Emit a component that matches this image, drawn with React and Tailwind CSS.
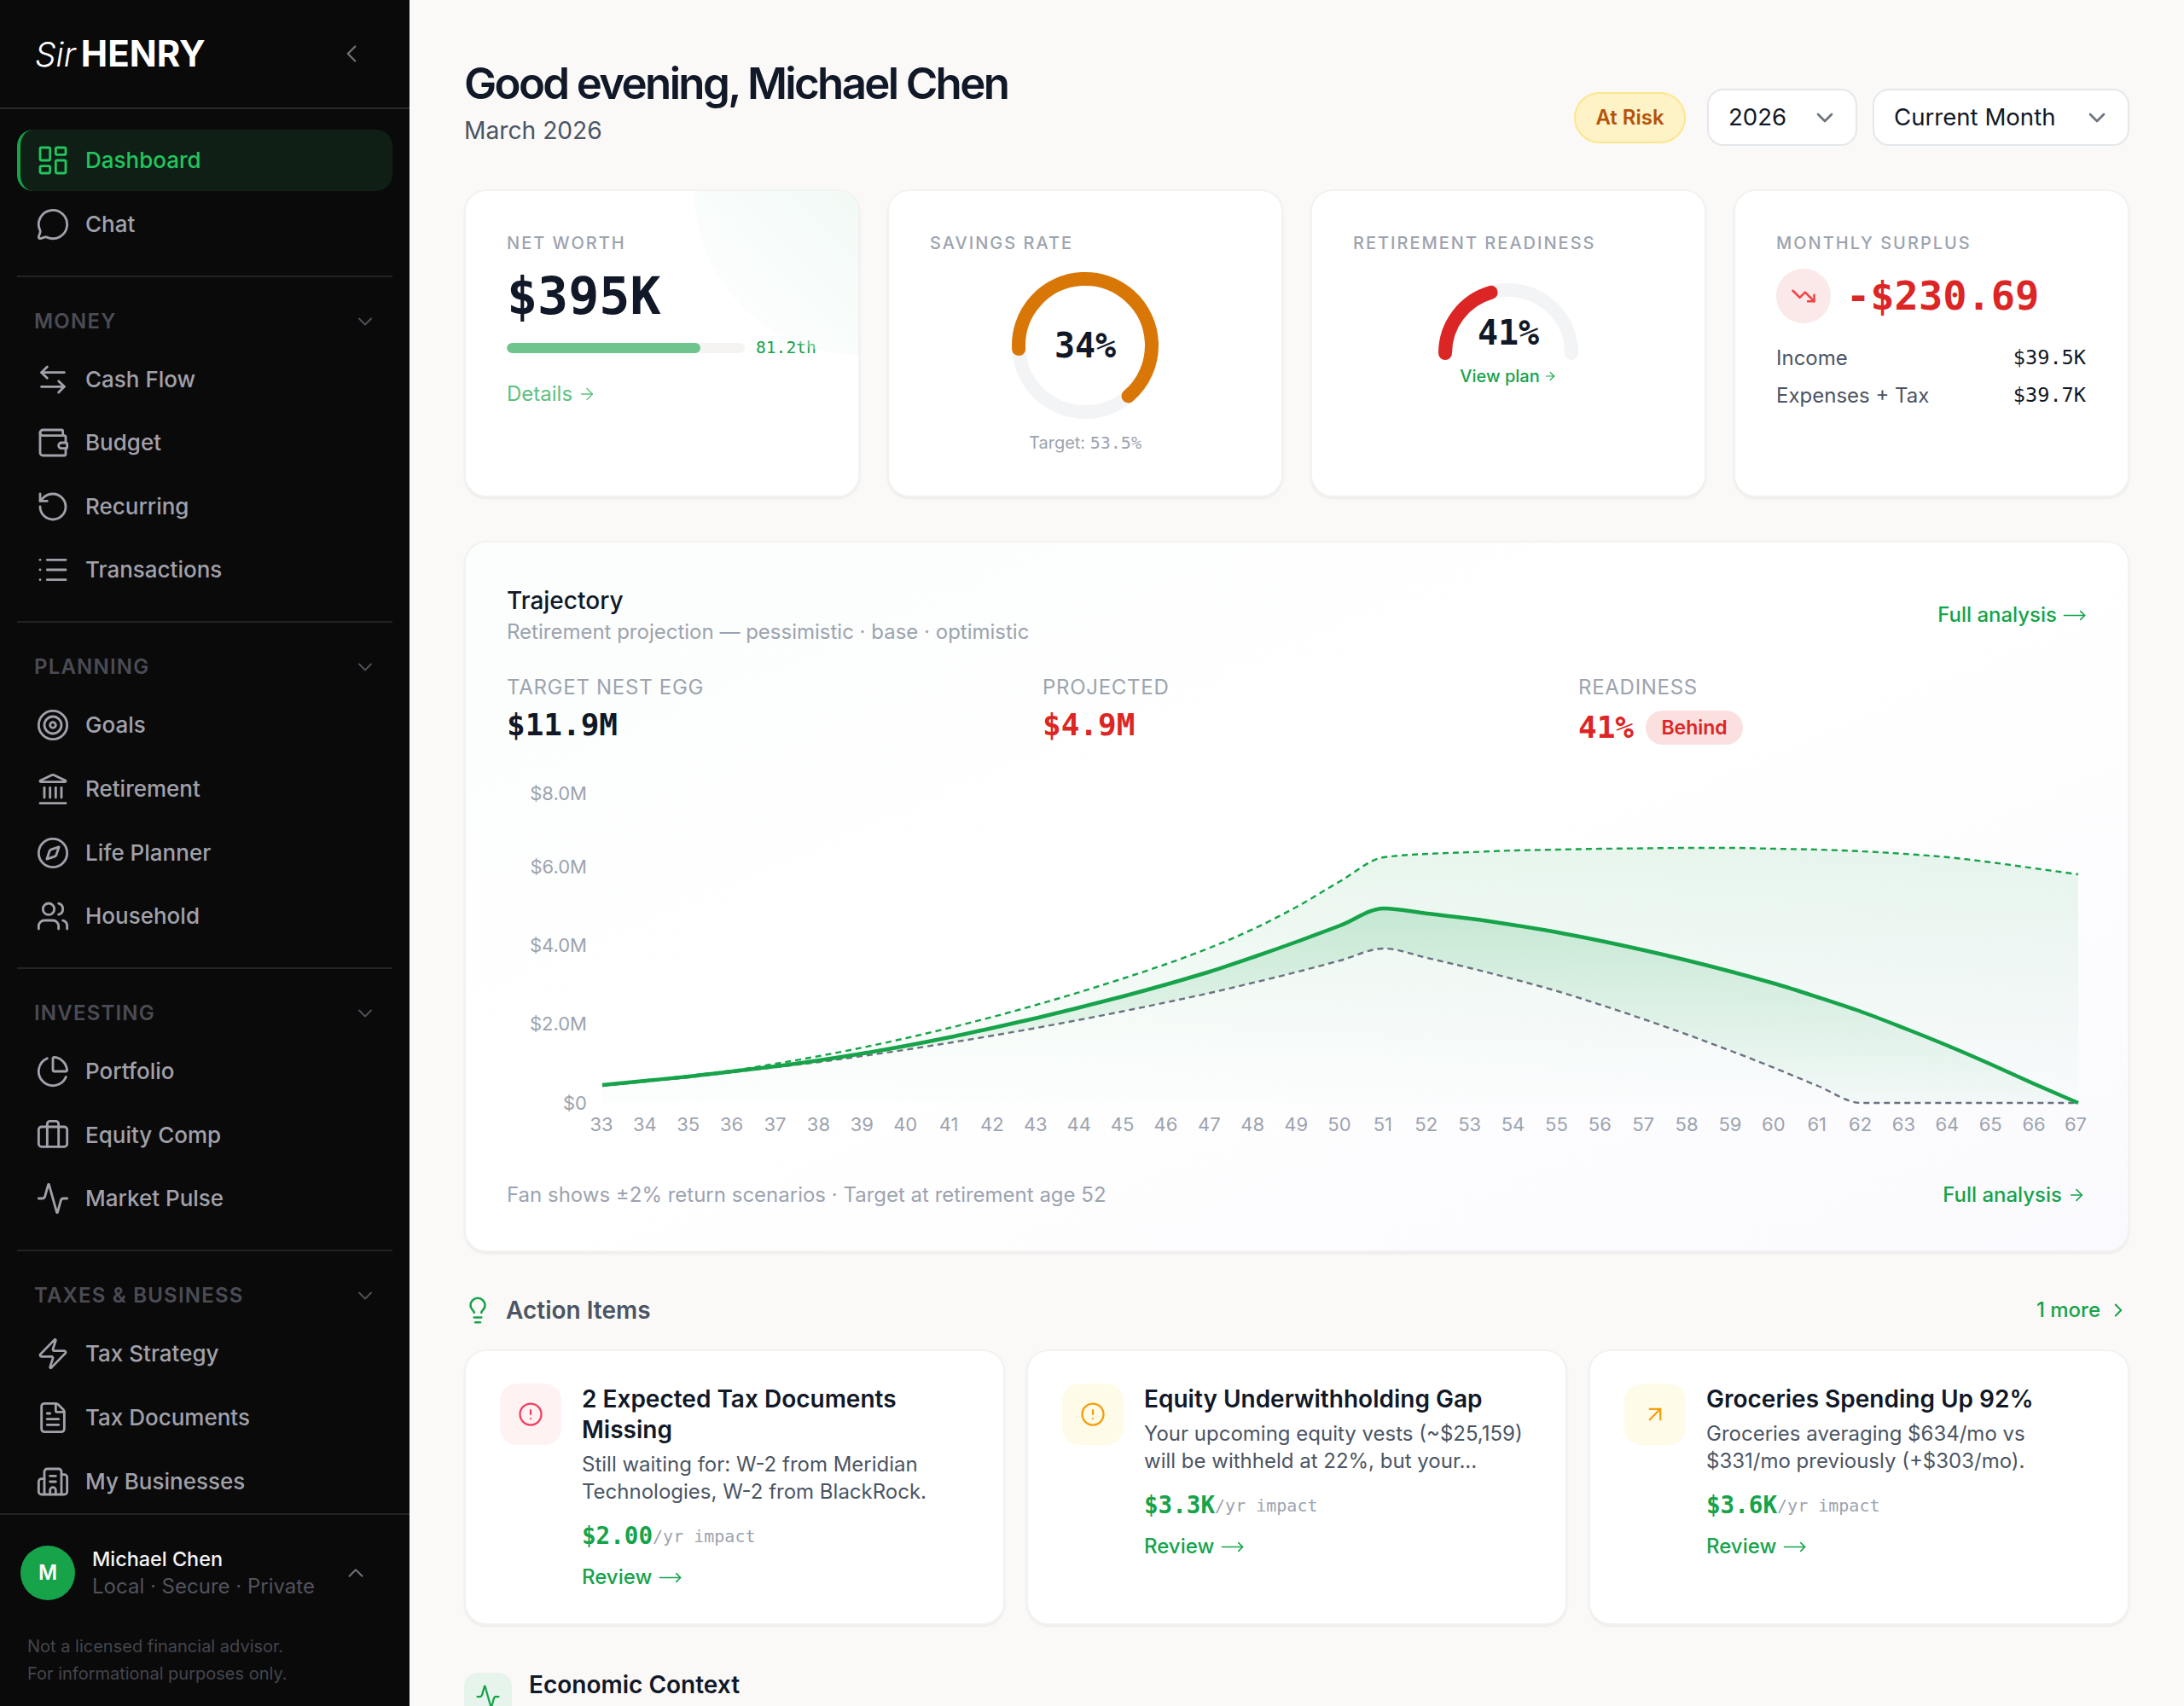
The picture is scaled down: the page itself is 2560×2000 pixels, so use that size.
import React from 'react';
import {
  LayoutDashboard, MessageCircle, ArrowLeftRight, Wallet, RotateCcw, List, Target, Landmark, Compass, Users,
  PieChart, Briefcase, Activity, Zap, FileText, Building2, ChevronLeft, ChevronDown, ChevronUp, ChevronRight,
  ArrowRight, TrendingDown, CircleAlert, ArrowUpRight, Lightbulb, MoveRight,
} from 'lucide-react';

const MONO = "font-['DejaVu_Sans_Mono',monospace]";

function NavItem({ icon: Icon, label, active }) {
  return (
    <div className={active
      ? 'h-[72px] flex items-center rounded-[19px] border-l-[4px] border-[#16a34a] bg-[#0f1f16] pl-[18px] text-[#22c55e]'
      : 'h-[72px] flex items-center pl-[22px] text-[#a1a1aa]'}>
      <Icon size={40} strokeWidth={1.7} className="shrink-0" />
      <span className="ml-[18px] text-[26px] font-medium leading-none">{label}</span>
    </div>
  );
}

function Section({ title, items }) {
  return (
    <div className="mt-[24px] border-t-2 border-[#232325] pt-[34px]">
      <div className="h-[36px] mb-[14px] flex items-center justify-between pl-[20px] pr-[18px]">
        <span className="text-[24px] font-semibold tracking-[0.05em] text-[#4b4b54]">{title}</span>
        <ChevronDown size={28} strokeWidth={1.6} className="text-[#52525b]" />
      </div>
      <div className="flex flex-col gap-[2.6px]">
        {items.map((i) => <NavItem key={i.label} {...i} />)}
      </div>
    </div>
  );
}

function Sidebar() {
  return (
    <aside className="w-[480px] h-[2000px] shrink-0 bg-[#0a0a0b] flex flex-col">
      <div className="h-[128px] shrink-0 border-b-2 border-[#2a2a2c] flex items-center justify-between pl-[41px] pr-[51px]">
        <div className="text-white leading-none flex items-baseline">
          <span className="italic font-light text-[39px]">Sir</span>
          <span className="font-bold ml-[6px] text-[42px]">HENRY</span>
        </div>
        <ChevronLeft size={34} strokeWidth={1.6} className="text-[#71717a]" />
      </div>
      <nav className="flex-1 overflow-hidden px-[20px] pt-[24px]">
        <div className="flex flex-col gap-[2.6px]">
          <NavItem icon={LayoutDashboard} label="Dashboard" active />
          <NavItem icon={MessageCircle} label="Chat" />
        </div>
        <Section title="MONEY" items={[
          { icon: ArrowLeftRight, label: 'Cash Flow' },
          { icon: Wallet, label: 'Budget' },
          { icon: RotateCcw, label: 'Recurring' },
          { icon: List, label: 'Transactions' },
        ]} />
        <Section title="PLANNING" items={[
          { icon: Target, label: 'Goals' },
          { icon: Landmark, label: 'Retirement' },
          { icon: Compass, label: 'Life Planner' },
          { icon: Users, label: 'Household' },
        ]} />
        <Section title="INVESTING" items={[
          { icon: PieChart, label: 'Portfolio' },
          { icon: Briefcase, label: 'Equity Comp' },
          { icon: Activity, label: 'Market Pulse' },
        ]} />
        <Section title="TAXES & BUSINESS" items={[
          { icon: Zap, label: 'Tax Strategy' },
          { icon: FileText, label: 'Tax Documents' },
          { icon: Building2, label: 'My Businesses' },
        ]} />
      </nav>
      <div className="h-[226px] shrink-0 border-t-2 border-[#232325] pt-[35px]">
        <div className="flex items-center pl-[24px] pr-[48px]">
          <div className="w-[64px] h-[64px] rounded-full bg-[#16a34a] flex items-center justify-center text-white text-[24px] font-semibold">M</div>
          <div className="ml-[20px] flex-1">
            <div className="text-[23.4px] leading-[32px] mt-[1px] font-medium text-[#f4f4f5]">Michael Chen</div>
            <div className="text-[24px] leading-[32px] text-[#52525b]">Local · Secure · Private</div>
          </div>
          <ChevronUp size={30} strokeWidth={1.6} className="text-[#71717a]" />
        </div>
        <div className="mt-[38px] pl-[32px] text-[20px] leading-[32px] text-[#45454c]">
          <div>Not a licensed financial advisor.</div>
          <div>For informational purposes only.</div>
        </div>
      </div>
    </aside>
  );
}

const cardCls = 'bg-white rounded-[26px] border-2 border-[#f3f2f0] shadow-[0_2px_3px_rgba(0,0,0,0.06)]';
const labelCls = 'text-[20px] leading-[28px] font-medium tracking-[0.1em] text-[#9ca3af]';

function Select({ label, width }) {
  return (
    <div className={`${width} h-[67px] rounded-[19px] border-2 border-[#e5e7eb] bg-white flex items-center justify-between pl-[23px] pr-[20px]`}>
      <span className="text-[27.6px] text-[#111827]">{label}</span>
      <ChevronDown size={32} strokeWidth={2} className="text-[#6b7280]" />
    </div>
  );
}

function NetWorth() {
  return (
    <div className={`${cardCls} relative overflow-hidden pl-[48px] pr-[48px] pt-[47px]`}>
      <div className="absolute top-0 right-0 w-[192px] h-[192px] rounded-bl-full bg-gradient-to-bl from-[#f2faf6] to-transparent" />
      <div className={labelCls}>NET WORTH</div>
      <div className={`${MONO} mt-[12px] text-[60px] leading-[72px] font-bold text-[#111827]`}>$395K</div>
      <div className="mt-[11px] flex items-center">
        <div className="w-[279px] h-[12px] rounded-full bg-[#f5f4f2] overflow-hidden">
          <div className="h-full w-[81.2%] rounded-full bg-[#6fc48e]" />
        </div>
        <span className={`${MONO} ml-[13px] text-[19.6px] leading-[28px] text-[#16a34a]`}>81.2th</span>
      </div>
      <div className="mt-[24px] flex items-center gap-[6px] text-[24px] leading-[32px] text-[#5fc080]">
        Details <ArrowRight size={22} strokeWidth={1.5} />
      </div>
    </div>
  );
}

function Savings() {
  const r = 78;
  const c = 2 * Math.PI * r;
  return (
    <div className={`${cardCls} pl-[48px] pr-[48px] pt-[47px]`}>
      <div className={labelCls}>SAVINGS RATE</div>
      <div className="relative mt-[18px] w-[176px] h-[176px] mx-auto">
        <svg width="176" height="176" viewBox="0 0 176 176">
          <circle cx="88" cy="88" r={r} fill="none" stroke="#f3f4f6" strokeWidth="16" />
          <circle cx="88" cy="88" r={r} fill="none" stroke="#d97706" strokeWidth="16" strokeLinecap="round"
            strokeDasharray={`${c * 0.645} ${c}`} transform="rotate(177 88 88)" />
        </svg>
        <div className={`${MONO} absolute inset-0 flex items-center justify-center text-[40px] font-bold text-[#111827]`}>34%</div>
      </div>
      <div className="mt-[12px] text-center text-[20px] leading-[28px] text-[#9ca3af]">
        Target: <span className={MONO}>53.5%</span>
      </div>
    </div>
  );
}

function Readiness() {
  const r = 74;
  const pts = `M 14 84 A ${r} ${r} 0 0 1 162 84`;
  const len = Math.PI * r;
  return (
    <div className={`${cardCls} pl-[48px] pr-[48px] pt-[47px]`}>
      <div className={labelCls}>RETIREMENT READINESS</div>
      <div className="relative mt-[31px] w-[176px] h-[100px] mx-auto">
        <svg width="176" height="100" viewBox="0 0 176 100">
          <path d={pts} fill="none" stroke="#f3f4f6" strokeWidth="16" strokeLinecap="round" />
          <path d={pts} fill="none" stroke="#dc2626" strokeWidth="16" strokeLinecap="round" strokeDasharray={`${len * 0.41} ${len}`} />
        </svg>
        <div className={`${MONO} absolute left-0 right-0 top-[35px] text-center text-[40px] leading-[50px] font-bold text-[#111827]`}>41%</div>
      </div>
      <div className="mt-[-3px] flex items-center justify-center gap-[4px] text-[20px] leading-[28px] font-medium text-[#16a34a]">
        View plan <ArrowRight size={16} strokeWidth={1.7} />
      </div>
    </div>
  );
}

function Surplus() {
  return (
    <div className={`${cardCls} pl-[48px] pr-[48px] pt-[47px]`}>
      <div className={labelCls}>MONTHLY SURPLUS</div>
      <div className="mt-[16px] flex items-center">
        <div className="w-[64px] h-[64px] rounded-full bg-[#fbe8e8] flex items-center justify-center">
          <TrendingDown size={30} className="text-[#ef4444]" />
        </div>
        <span className={`${MONO} ml-[18px] text-[47px] leading-[64px] font-bold text-[#dc2626]`}>-$230.69</span>
      </div>
      <div className="mt-[19px] flex justify-between items-center h-[44px]">
        <span className="text-[24px] text-[#4b5563]">Income</span>
        <span className={`${MONO} text-[23.6px] text-[#111827] mr-[1px]`}>$39.5K</span>
      </div>
      <div className="flex justify-between items-center h-[44px]">
        <span className="text-[24px] text-[#4b5563]">Expenses + Tax</span>
        <span className={`${MONO} text-[23.6px] text-[#111827] mr-[1px]`}>$39.7K</span>
      </div>
    </div>
  );
}

const ageX = (i) => 704 + i * (1730 / 34);
const TOP = [1272,1267,1261,1255,1247,1238,1228,1217,1205,1192,1178,1163,1147,1130,1111,1089,1063,1033,1005,1001,999,997,996,995,994.5,994,994,995,996,998,1001,1005,1011,1018,1025];
const BASE = [1272,1267,1262,1256,1250,1243,1235,1226,1216,1205,1193.5,1181,1168,1154,1139,1122,1104,1085,1065,1071,1077,1084.5,1093,1103,1114,1126,1139,1153,1169,1186,1205.5,1226,1248,1271,1293];
const PESS = [1273,1268,1263,1257,1251,1245,1238,1230.5,1222.5,1214,1205,1195.5,1185.5,1175,1164,1152,1139.5,1126,1112,1123,1135,1148,1162,1178,1195,1213,1232,1252,1273,1293,1293,1293,1293,1293,1293];

function monotone(pts) {
  const n = pts.length;
  const d = [];
  const m = [];
  for (let i = 0; i < n - 1; i++) d.push((pts[i + 1][1] - pts[i][1]) / (pts[i + 1][0] - pts[i][0]));
  m[0] = d[0];
  m[n - 1] = d[n - 2];
  for (let i = 1; i < n - 1; i++) m[i] = d[i - 1] * d[i] <= 0 ? 0 : (2 * d[i - 1] * d[i]) / (d[i - 1] + d[i]);
  let s = '';
  for (let i = 0; i < n - 1; i++) {
    const h = (pts[i + 1][0] - pts[i][0]) / 3;
    s += ` C ${pts[i][0] + h} ${pts[i][1] + m[i] * h}, ${pts[i + 1][0] - h} ${pts[i + 1][1] - m[i + 1] * h}, ${pts[i + 1][0]} ${pts[i + 1][1]}`;
  }
  return s;
}
const toPts = (a) => a.map((y, i) => [ageX(i), y]);
const line = (a) => `M ${ageX(0)} ${a[0]}` + monotone(toPts(a));
const rev = (a) => {
  const p = toPts(a).reverse();
  return `L ${p[0][0]} ${p[0][1]}` + monotone(p);
};

function Chart() {
  const ages = Array.from({ length: 35 }, (_, i) => 33 + i);
  const yTicks = [['$8.0M', 930], ['$6.0M', 1016], ['$4.0M', 1108], ['$2.0M', 1200], ['$0', 1293]];
  return (
    <svg width="1856" height="440" viewBox="592 905 1856 440" className="block">
      <defs>
        <linearGradient id="fanTop" x1="0" y1="0" x2="0" y2="1">
          <stop offset="0%" stopColor="#16a34a" stopOpacity="0.1" />
          <stop offset="100%" stopColor="#16a34a" stopOpacity="0.01" />
        </linearGradient>
        <linearGradient id="fanBand" x1="0" y1="0" x2="0" y2="1">
          <stop offset="0%" stopColor="#16a34a" stopOpacity="0.18" />
          <stop offset="100%" stopColor="#16a34a" stopOpacity="0.03" />
        </linearGradient>
      </defs>
      <path d={`${line(TOP)} L ${ageX(34)} 1293 L ${ageX(0)} 1293 Z`} fill="url(#fanTop)" />
      <path d={`${line(BASE)} ${rev(PESS)} Z`} fill="url(#fanBand)" />
      <path d={line(TOP)} fill="none" stroke="#16a34a" strokeWidth="2.4" strokeDasharray="7 5" />
      <path d={line(PESS)} fill="none" stroke="#6b7280" strokeWidth="2.4" strokeDasharray="7 5" />
      <path d={line(BASE)} fill="none" stroke="#16a34a" strokeWidth="4.5" />
      {yTicks.map(([t, y]) => (
        <text key={t} x="686" y={y + 8} textAnchor="end" fontSize="22" fill="#9ca3af">{t}</text>
      ))}
      {ages.map((a, i) => (
        <text key={a} x={i === 34 ? ageX(i) - 3 : ageX(i) - 1} y="1326" textAnchor="middle" fontSize="22" fill="#9ca3af">{a}</text>
      ))}
    </svg>
  );
}

function Trajectory() {
  return (
    <div className={`${cardCls} mt-[51px] h-[834px] px-[48px] pt-[48px] bg-gradient-to-br from-[#fbfefc] via-white to-[#fafafe]`}>
      <div className="flex items-center justify-between">
        <div>
          <div className="text-[28px] leading-[40px] font-medium text-[#111827]">Trajectory</div>
          <div className="text-[24px] leading-[34px] text-[#9ca3af]">Retirement projection — pessimistic · base · optimistic</div>
        </div>
        <div className="flex items-center gap-[6px] text-[24px] font-medium text-[#16a34a]">Full analysis <MoveRight size={29} strokeWidth={1.3} /></div>
      </div>
      <div className="mt-[32px] grid grid-cols-3 gap-[32px]">
        <div>
          <div className="text-[24px] leading-[32px] tracking-[0.03em] text-[#9ca3af]">TARGET NEST EGG</div>
          <div className={`${MONO} mt-[2px] text-[36px] leading-[52px] font-bold text-[#111827]`}>$11.9M</div>
        </div>
        <div>
          <div className="text-[24px] leading-[32px] tracking-[0.03em] text-[#9ca3af]">PROJECTED</div>
          <div className={`${MONO} mt-[2px] text-[36px] leading-[52px] font-bold text-[#dc2626]`}>$4.9M</div>
        </div>
        <div>
          <div className="text-[24px] leading-[32px] tracking-[0.03em] text-[#9ca3af]">READINESS</div>
          <div className="mt-[9px] flex items-center gap-[14px]">
            <span className={`${MONO} text-[36px] leading-[44px] font-bold text-[#dc2626]`}>41%</span>
            <span className="h-[40px] w-[114px] rounded-full bg-[#fbe0e0] flex items-center justify-center text-[23px] font-semibold text-[#dc2626]">Behind</span>
          </div>
        </div>
      </div>
      <div className="mt-[29px]"><Chart /></div>
      <div className="mt-[38px] flex items-center justify-between">
        <span className="text-[24px] leading-[36px] text-[#9ca3af]">Fan shows ±2% return scenarios · Target at retirement age 52</span>
        <span className="flex items-center gap-[6px] text-[24px] leading-[36px] font-medium text-[#16a34a] mr-[1px]">Full analysis <ArrowRight size={22} strokeWidth={1.7} /></span>
      </div>
    </div>
  );
}

function ActionCard({ icon: Icon, box, color, title, desc, amount, size = 30 }) {
  return (
    <div className={`${cardCls} flex px-[40px] pt-[38px] gap-[24px]`}>
      <div className={`${box} w-[72px] h-[72px] rounded-[20px] shrink-0 flex items-center justify-center`}>
        <Icon size={size} strokeWidth={1.8} className={color} />
      </div>
      <div className="flex-1">
        <div className="text-[28px] leading-[36px] font-semibold text-[#111827]">{title}</div>
        <div className="mt-[7px] text-[24px] leading-[32px] text-[#4b5563]">
          {desc.map((d) => <div key={d}>{d}</div>)}
        </div>
        <div className="mt-[16px] h-[40px] flex items-center">
          <span className={`${MONO} text-[27.6px] font-bold text-[#16a34a]`}>{amount}</span>
          <span className={`${MONO} text-[20px] text-[#9ca3af]`}>/yr impact</span>
        </div>
        <div className="mt-[12px] flex items-center gap-[7px] text-[24px] leading-[32px] font-medium text-[#16a34a]">Review <MoveRight size={29} strokeWidth={1.3} /></div>
      </div>
    </div>
  );
}

export default function App() {
  return (
    <div className="w-[2560px] h-[2000px] overflow-hidden flex bg-[#faf9f7] font-['Inter',sans-serif]">
      <Sidebar />
      <main className="flex-1 min-w-0 px-[64px] pt-[64px]">
        <header className="flex items-end justify-between">
          <div>
            <h1 className="text-[51px] leading-[68px] font-semibold tracking-[-0.052em] text-[#111827]">Good evening, Michael Chen</h1>
            <div className="mt-[3px] text-[28.2px] leading-[36px] text-[#4b5563]">March 2026</div>
          </div>
          <div className="flex items-center gap-[25px]">
            <div className="w-[131px] h-[60px] rounded-full border-2 border-[#fde68a] bg-[#fef3c7] flex items-center justify-center text-[24px] font-semibold text-[#b45309]">At Risk</div>
            <div className="flex gap-[18px]">
              <Select label="2026" width="w-[176px]" />
              <Select label="Current Month" width="w-[301px]" />
            </div>
          </div>
        </header>
        <section className="mt-[51px] h-[361px] grid grid-cols-4 gap-[32px]">
          <NetWorth />
          <Savings />
          <Readiness />
          <Surplus />
        </section>
        <Trajectory />
        <div className="mt-[50px] h-[36px] flex items-center justify-between">
          <div className="flex items-center">
            <Lightbulb size={34} strokeWidth={1.8} className="text-[#16a34a] ml-[-1px]" />
            <span className="ml-[16px] text-[28px] font-semibold text-[#4b5563]">Action Items</span>
          </div>
          <div className="flex items-center gap-[8px] text-[24px] font-medium text-[#16a34a]">1 more <ChevronRight size={26} strokeWidth={1.8} /></div>
        </div>
        <section className="mt-[28px] h-[323px] grid grid-cols-3 gap-[25px]">
          <ActionCard icon={CircleAlert} box="bg-[#fef2f2]" color="text-[#f43f5e]" title="2 Expected Tax Documents Missing"
            desc={['Still waiting for: W-2 from Meridian', 'Technologies, W-2 from BlackRock.']} amount="$2.00" />
          <ActionCard icon={CircleAlert} box="bg-[#fefce8]" color="text-[#f59e0b]" title="Equity Underwithholding Gap"
            desc={['Your upcoming equity vests (~$25,159)', 'will be withheld at 22%, but your...']} amount="$3.3K" />
          <ActionCard icon={ArrowUpRight} box="bg-[#fefce8]" color="text-[#f59e0b]" title="Groceries Spending Up 92%"
            desc={['Groceries averaging $634/mo vs', '$331/mo previously (+$303/mo).']} amount="$3.6K" />
        </section>
        <div className="mt-[56px] flex items-start gap-[20px]">
          <div className="w-[56px] h-[56px] rounded-[16px] bg-[#e6f4ec] flex items-center justify-center">
            <Activity size={30} strokeWidth={1.8} className="text-[#16a34a]" />
          </div>
          <span className="text-[28px] leading-[28px] font-semibold text-[#111827]">Economic Context</span>
        </div>
      </main>
    </div>
  );
}
